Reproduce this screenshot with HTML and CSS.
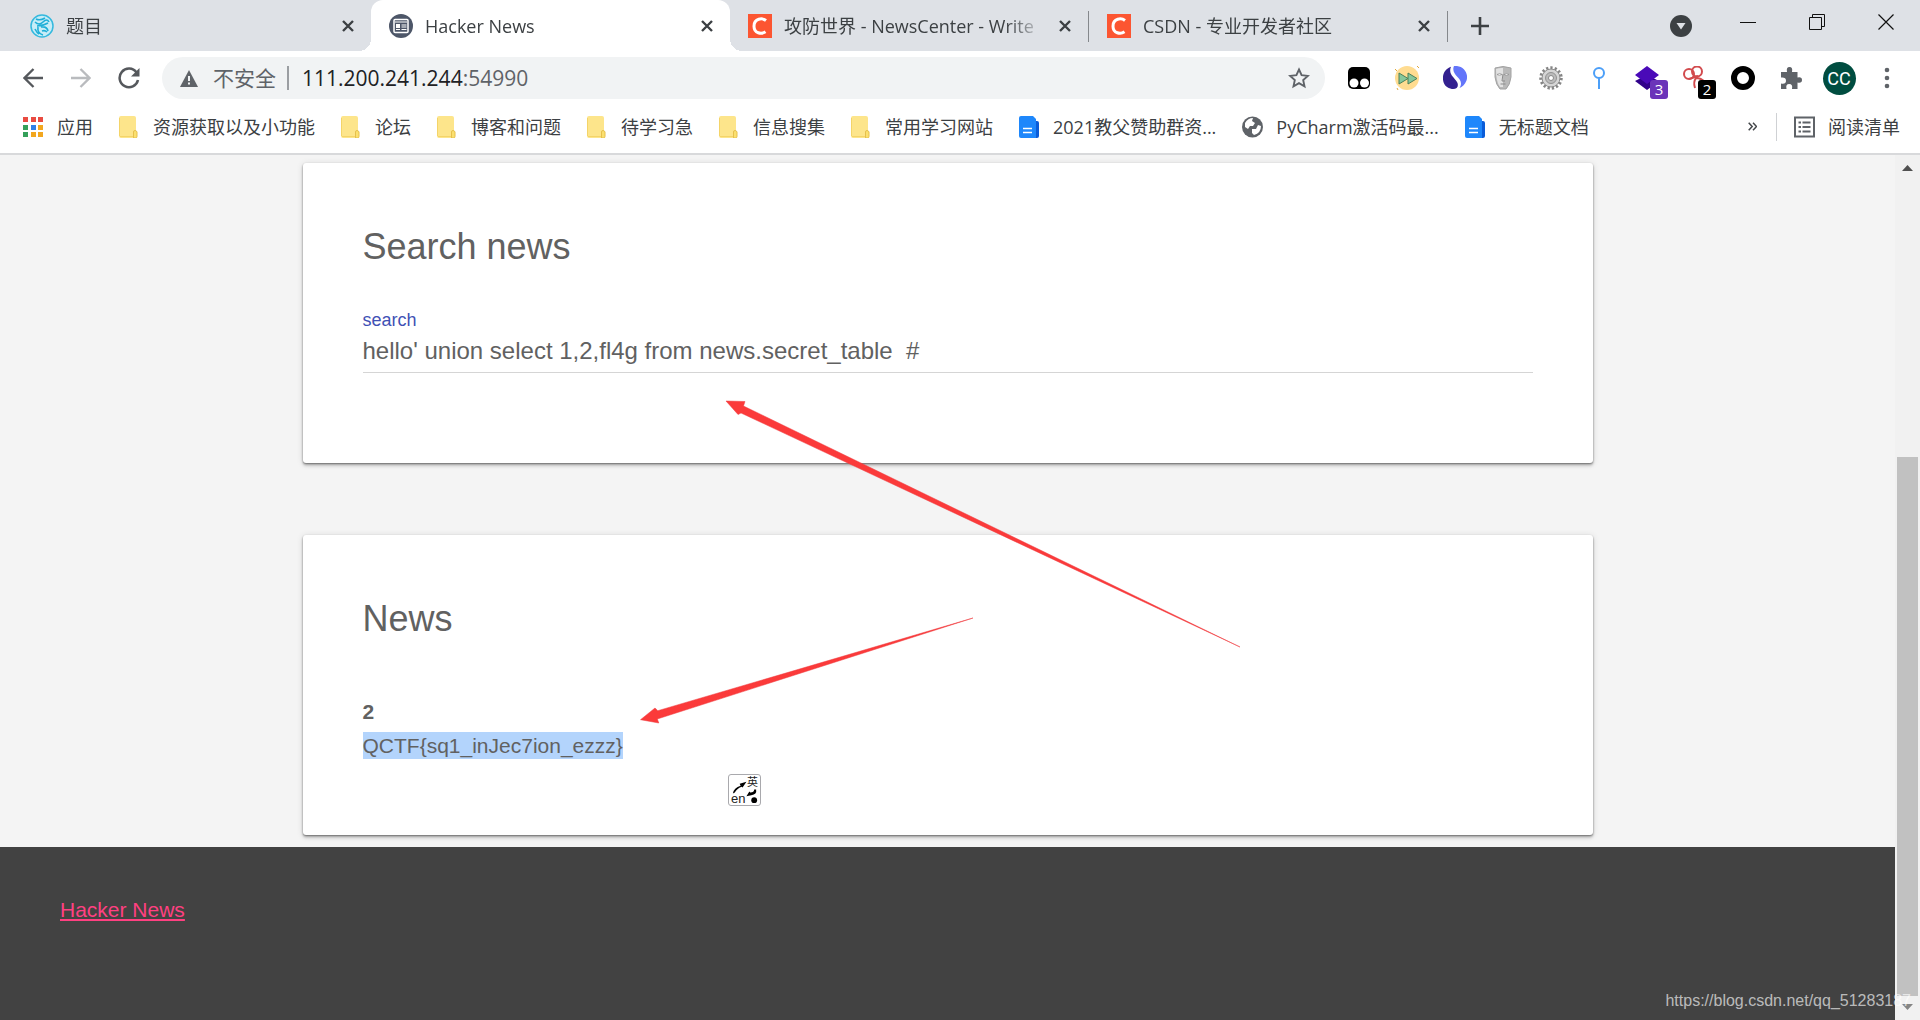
FILE: index.html
```html
<!DOCTYPE html>
<html lang="zh-CN">
<head>
<meta charset="utf-8">
<title>Hacker News</title>
<link rel="stylesheet" href="styles.css">
</head>
<body>
<svg class="defs" aria-hidden="true">
  <symbol id="close" viewBox="0 0 14 14"><path d="M2 2l10 10M12 2L2 12" stroke="#3c4043" stroke-width="2.400" fill="none"/></symbol>
  <symbol id="folder" viewBox="0 0 21 22"><path d="M0 2q0-2 2-2h13q2 0 2 2v20H2q-2 0-2-2z" fill="#fde58b"/><path d="M1 20.500h16M.5 2v18" stroke="#f4d469" fill="none"/><path d="M14.500 22v-6q0-1.500 1.500-1.500t2 1.500v4.500q0 1.500-1.500 1.500z" fill="#fbe06f" stroke="#e6c04d"/></symbol>
  <symbol id="doc" viewBox="0 0 21 22"><path d="M15 5h3q2 0 2 2v13q0 2-2 2h-3z" fill="#0b5cd8"/><path d="M2 0h12l3 3v19H2q-2 0-2-2V2q0-2 2-2z" fill="#1e87fb"/><path d="M4 12.500h9M4 16.500h9" stroke="#fff" stroke-width="1.600"/></symbol>
  <symbol id="csdn" viewBox="0 0 24 24"><path d="M0 0h24v24H0z" fill="#fc5531"/><path d="M18 6.500C14.500 3.800 6 4 6 12.200c0 7.300 7.500 8.300 11.500 5.600" stroke="#fff" stroke-width="3" fill="none"/></symbol>
</svg>

<header class="browser">
  <div class="tabstrip">
    <div class="tab">
      <svg class="favicon" viewBox="0 0 24 24"><circle cx="12" cy="12" r="11" fill="#c8edf7" stroke="#35b9de" stroke-width="1.500"/><path d="M5 8q4 4 8 0t6 0M7 12q6 0 11-3M8 13q-1 6 5 8M11 13q6-1 7 4M5 15q2 4 4 5M12 17q3-1 5 1M6 5q4 2 9-1" stroke="#20afd8" stroke-width="1.600" fill="none"/></svg>
      <span class="tab-title">题目</span>
      <button class="tab-close" aria-label="关闭"><svg width="14" height="14"><use href="#close"/></svg></button>
    </div>
    <div class="tab active">
      <svg class="favicon" viewBox="0 0 24 24"><circle cx="12" cy="12" r="12" fill="#4d5668"/><rect x="5" y="5.500" width="14" height="13" rx="1" fill="none" stroke="#fff" stroke-width="1.500"/><path d="M6 8h12M12.500 11h5M12.500 13h5M12.500 15.500h5M7 15.500h4" stroke="#fff" stroke-width="1.200"/><path d="M7 10h4v4H7z" fill="#fff"/></svg>
      <span class="tab-title">Hacker News</span>
      <button class="tab-close" aria-label="关闭"><svg width="14" height="14"><use href="#close"/></svg></button>
    </div>
    <div class="tab divided">
      <svg class="favicon"><use href="#csdn"/></svg>
      <span class="tab-title">攻防世界 - NewsCenter - Write</span>
      <button class="tab-close" aria-label="关闭"><svg width="14" height="14"><use href="#close"/></svg></button>
    </div>
    <div class="tab divided">
      <svg class="favicon"><use href="#csdn"/></svg>
      <span class="tab-title">CSDN - 专业开发者社区</span>
      <button class="tab-close" aria-label="关闭"><svg width="14" height="14"><use href="#close"/></svg></button>
    </div>
    <button class="strip-button" aria-label="新标签页"><svg width="18" height="18" viewBox="0 0 18 18"><path d="M9 0v18M0 9h18" stroke="#3c4043" stroke-width="2.600"/></svg></button>
    <span class="spacer"></span>
    <button class="strip-button" aria-label="搜索标签页"><svg width="22" height="22" viewBox="0 0 22 22"><circle cx="11" cy="11" r="11" fill="#3c4043"/><path d="M6.500 8h9L11 14.500z" fill="#dee1e6"/></svg></button>
    <button class="window-button" aria-label="最小化"><svg width="16" height="16" viewBox="0 0 16 16"><path d="M0 8.500h16" stroke="#111"/></svg></button>
    <button class="window-button" aria-label="还原"><svg width="16" height="16" viewBox="0 0 16 16"><path d="M.5 3.500h12v12H.5zM3.500 3.500v-3h12v12h-3" stroke="#111" fill="none"/></svg></button>
    <button class="window-button" aria-label="关闭窗口"><svg width="16" height="16" viewBox="0 0 16 16"><path d="M.5.5l15 15M15.500.5l-15 15" stroke="#111" stroke-width="1.200"/></svg></button>
  </div>

  <div class="toolbar">
    <button class="tool" aria-label="后退"><svg width="20" height="20" viewBox="0 0 20 20"><path d="M20 10H2M10.500 1L1.500 10l9 9" stroke="#55585c" stroke-width="2.300" fill="none"/></svg></button>
    <button class="tool" aria-label="前进"><svg width="20" height="20" viewBox="0 0 20 20"><path d="M0 10h18M9.500 1l9 9-9 9" stroke="#b9bbbe" stroke-width="2.300" fill="none"/></svg></button>
    <button class="tool" aria-label="重新加载"><svg width="22" height="22" viewBox="0 0 22 22"><path d="M18.500 5.500A9.300 9.300 0 1 0 20 13" stroke="#55585c" stroke-width="2.500" fill="none"/><path d="M21.500 1v8.500H13z" fill="#55585c"/></svg></button>
    <div class="omnibox">
      <svg width="18" height="17" viewBox="0 0 18 17"><path d="M9 0l9 17H0z" fill="#5f6368"/><path d="M9 6v5M9 12.500v2" stroke="#f1f3f4" stroke-width="2"/></svg>
      <span class="security">不安全</span>
      <span class="url">111.200.241.244<span class="port">:54990</span></span>
      <button class="star" aria-label="为此标签页添加书签"><svg width="22" height="22" viewBox="0 0 22 22"><path d="M11 2.500l2.600 5.700 6.200.7-4.600 4.200 1.300 6.200-5.500-3.200-5.500 3.200 1.300-6.200L2.200 8.900l6.200-.7z" stroke="#5f6368" stroke-width="1.900" fill="none"/></svg></button>
    </div>
    <div class="extensions">
      <button class="tool" aria-label="Tampermonkey"><svg width="24" height="24" viewBox="0 0 24 24"><rect x="1" y="1" width="22" height="22" rx="5"/><circle cx="7" cy="17" r="4.500" fill="#fff"/><circle cx="17.500" cy="17" r="4.500" fill="#fff"/></svg></button>
      <button class="tool" aria-label="快进"><svg width="26" height="26" viewBox="0 0 26 26"><circle cx="13" cy="13" r="12" fill="#ffdc91"/><path d="M5 8l9 5.500L5 19zM14 8l9 5.500-9 5.500z" fill="#86c79b" stroke="#4b805b"/><path d="M1 4l2 2M23 1l2 2M3 23l1 2" stroke="#e0a83b"/></svg></button>
      <button class="tool" aria-label="Similarweb"><svg width="24" height="24" viewBox="0 0 24 24"><path d="M8 .7C-2 4-2 17 4 21c8 5 13 0 10-5C11 11 5 8 8 .7z" fill="#33208f"/><path d="M11 0c9-1 15 7 12.500 14.500-1.500 4-4.500 6.500-7 7.500 3-5 1-8-2-11s-5.500-7-3.500-11z" fill="#6375fa"/></svg></button>
      <button class="tool" aria-label="面具"><svg width="18" height="24" viewBox="0 0 18 24"><path d="M1 2q8-3 16 0v9q-1 8-5 12H6Q2 19 1 11z" fill="#b9b9b9" stroke="#a2a2a2"/><path d="M2 3q4-1.500 7-1v19H6Q2 16 2 3z" fill="#e2e2e2"/><path d="M3 8.500q3-2 5 0-3 1.500-5 0M10 8.500q3-2 5 0-3 1.500-5 0" fill="#fff" stroke="#8a8a8a" stroke-width=".7"/><path d="M9 8l-1 7h3M6.500 18h5" fill="none" stroke="#8b8b8b"/></svg></button>
      <button class="tool" aria-label="设置"><svg width="24" height="24" viewBox="0 0 24 24"><circle cx="12" cy="12" r="10" fill="none" stroke="#858585" stroke-width="3.500" stroke-dasharray="2.200 2"/><circle cx="12" cy="12" r="9" fill="#d5d5d5" stroke="#8c8c8c"/><circle cx="12" cy="12" r="5.500" fill="#bbb" stroke="#929292"/><circle cx="12" cy="12" r="2.500" fill="#fff" stroke="#888"/></svg></button>
      <button class="tool" aria-label="图钉"><svg width="14" height="22" viewBox="0 0 14 22"><circle cx="7" cy="6" r="5" fill="none" stroke="#4c9ff8" stroke-width="2"/><path d="M7 11v11" stroke="#4c9ff8" stroke-width="2"/></svg></button>
      <button class="tool" aria-label="Wappalyzer"><svg width="24" height="24" viewBox="0 0 24 24"><path d="M12 9l12 6-12 9-12-9z" fill="#30018a"/><path d="M12 0l12 9-12 9L0 9z" fill="#4a0ab8"/></svg><span class="badge purple">3</span></button>
      <button class="tool" aria-label="扩展程序"><svg width="24" height="24" viewBox="0 0 24 24"><g fill="none" stroke="#d24b4e" stroke-width="2"><circle cx="6" cy="8" r="5"/><circle cx="14" cy="5.500" r="5"/><path d="M12 22q-2-6 1-10 5 0 9 4M6 13l6-2 3-1"/></g></svg><span class="badge">2</span></button>
      <button class="tool" aria-label="圆环"><svg width="24" height="24" viewBox="0 0 24 24"><circle cx="12" cy="12" r="9" fill="none" stroke="#000" stroke-width="6"/></svg></button>
      <button class="tool" aria-label="扩展程序菜单"><svg width="22" height="22" viewBox="0 0 22 22"><path d="M1 5h6q-1-5 2.500-5T12 5h5.500v5.500q4.500-1 4.500 2.500t-4.500 2.500V22H12q1-5-2.800-5T6.500 22H1v-5.500q5 1 5-2.800T1 10.500z" fill="#5f6368"/></svg></button>
      <button class="tool" aria-label="用户"><span class="avatar">CC</span></button>
      <button class="tool" aria-label="菜单"><svg width="6" height="22" viewBox="0 0 6 22"><g fill="#5f6368"><circle cx="3" cy="3" r="2.300"/><circle cx="3" cy="11" r="2.300"/><circle cx="3" cy="19" r="2.300"/></g></svg></button>
    </div>
  </div>

  <nav class="bookmarks">
    <a class="bookmark" href="#"><svg viewBox="0 0 21 22"><path d="M0 1h5v5H0zM8 1h5v5H8zM15 1h5v5h-5z" fill="#e94b41"/><path d="M0 9h5v5H0zM0 16h5v5H0z" fill="#34a05a"/><path d="M8 9h5v5H8z" fill="#2f80e8"/><path d="M15 9h5v5h-5zM8 16h5v5H8zM15 16h5v5h-5z" fill="#f2a71f"/></svg>应用</a>
    <a class="bookmark" href="#"><svg><use href="#folder"/></svg>资源获取以及小功能</a>
    <a class="bookmark" href="#"><svg><use href="#folder"/></svg>论坛</a>
    <a class="bookmark" href="#"><svg><use href="#folder"/></svg>博客和问题</a>
    <a class="bookmark" href="#"><svg><use href="#folder"/></svg>待学习急</a>
    <a class="bookmark" href="#"><svg><use href="#folder"/></svg>信息搜集</a>
    <a class="bookmark" href="#"><svg><use href="#folder"/></svg>常用学习网站</a>
    <a class="bookmark" href="#"><svg><use href="#doc"/></svg>2021教父赞助群资...</a>
    <a class="bookmark" href="#"><svg viewBox="0 0 21 22"><circle cx="10.500" cy="11" r="10.500" fill="#5f6368"/><path d="M3 7q3-5 8-5l-1 3 3 2-2 3H8l-2 3-3-2zM10 13h4l2-4 3 1q0 7-7 9l-2-2z" fill="#fff"/></svg>PyCharm激活码最...</a>
    <a class="bookmark" href="#"><svg><use href="#doc"/></svg>无标题文档</a>
    <span class="spacer"></span>
    <button class="more" aria-label="更多书签"><svg width="9" height="9" viewBox="0 0 9 9"><path d="M.7.7l3.500 3.800L.7 8.300M5 .7l3.500 3.800L5 8.300" stroke="#44474a" stroke-width="1.500" fill="none"/></svg></button>
    <a class="bookmark reading" href="#"><svg viewBox="0 0 21 22"><path d="M1 1.500h19v19H1z" fill="none" stroke="#5f6368" stroke-width="2"/><path d="M4.500 6.500H7M4.500 11H7M4.500 15.500H7M8.500 6.500h8M8.500 11h8M8.500 15.500h8" stroke="#5f6368" stroke-width="2"/></svg>阅读清单</a>
  </nav>
</header>

<div class="viewport">
  <div class="document">
    <main>
      <section class="card">
        <h2>Search news</h2>
        <form>
          <label for="search">search</label>
          <input id="search" type="text" value="hello' union select 1,2,fl4g from news.secret_table  #">
        </form>
      </section>
      <section class="card">
        <h2>News</h2>
        <article>
          <b>2</b>
          <p><mark>QCTF{sq1_inJec7ion_ezzz}</mark></p>
        </article>
      </section>
    </main>
    <footer><a href="#">Hacker News</a></footer>
  </div>
  <div class="scrollbar" aria-hidden="true">
    <svg width="11" height="6" viewBox="0 0 11 6"><path d="M0 6L5.500 0 11 6z" fill="#505050"/></svg>
    <div class="track"><div class="thumb"></div></div>
    <svg width="11" height="6" viewBox="0 0 11 6"><path d="M0 0l5.500 6L11 0z" fill="#858585"/></svg>
  </div>
  <svg class="arrows" width="1300" height="800" viewBox="0 155 1300 800" aria-hidden="true"><path d="M726 401l19 .5-1.500 4.500L1240 647 741 413l-3 1.500zM640.500 719.700L655 708l2.800 2.700L973 618 657.300 719l1.500 4z" fill="#fb3a3a" stroke="#ee3a3f" stroke-width=".5"/></svg>
  <button class="translate" aria-label="英 en"><span class="zh">英</span><span class="en">en</span><svg viewBox="0 0 32 32"><path d="M4 19q1-6 8-8l-1-2 7-2-4 6-1-1q-5 2-7 6zM28 15q1 5-5 6l-5 1 3-5 1 1q4 0 4-3z"/><circle cx="26" cy="26" r="3"/></svg></button>
  <span class="watermark">https://blog.csdn.net/qq_51283187</span>
</div>
</body>
</html>
```
FILE: styles.css
```css
* { box-sizing: border-box; }

body {
  margin: 0;
  min-height: 100vh;
  display: flex;
  flex-direction: column;
  font-family: "Liberation Sans", "Noto Sans CJK SC", sans-serif;
  color: #616161;
}

button {
  border: 0;
  padding: 0;
  background: none;
  font: inherit;
  display: flex;
  align-items: center;
  justify-content: center;
  flex: none;
}

svg { flex: none; display: block; }
.defs { position: absolute; width: 0; height: 0; }
.spacer { flex: 1; }

/* Browser chrome */
.browser {
  background: #fff;
  border-bottom: 2px solid #d8d9db;
  font-family: "Open Sans", "Noto Sans CJK SC", sans-serif;
  font-size: 18px;
  font-weight: 400;
  color: #3c4043;
}

.tabstrip {
  display: flex;
  height: 51px;
  padding-left: 12px;
  background: #dee1e6;
}

.tab {
  position: relative;
  flex: 0 1 359px;
  min-width: 0;
  display: flex;
  align-items: center;
  gap: 12px;
  padding: 0 16px 0 18px;
}

.tab.active { background: #fff; border-radius: 12px 12px 0 0; }
.tab.active::before,
.tab.active::after {
  content: "";
  position: absolute;
  bottom: 0;
  width: 12px;
  height: 12px;
}
.tab.active::before { right: 100%; background: radial-gradient(circle at 0 0, transparent 12px, #fff 12px); }
.tab.active::after { left: 100%; background: radial-gradient(circle at 100% 0, transparent 12px, #fff 12px); }

.tab.divided { border-right: 1px solid; border-image: linear-gradient(transparent 12px, #85888c 12px, #85888c 41px, transparent 41px) 1; }

.favicon { width: 24px; height: 24px; }

.tab-title {
  flex: 1;
  min-width: 0;
  overflow: hidden;
  white-space: nowrap;
  line-height: 28px;
  mask-image: linear-gradient(to left, transparent, #000 40px);
}

.strip-button { width: 64px; }
.window-button { width: 69px; height: 43px; }

.toolbar {
  display: flex;
  align-items: center;
  padding: 6px 9px 5px;
}

.tool { position: relative; width: 48px; height: 42px; }

.omnibox {
  flex: 1;
  min-width: 0;
  display: flex;
  align-items: center;
  height: 42px;
  margin: 0 10px 0 9px;
  padding: 0 15px 0 18px;
  border-radius: 21px;
  background: #f1f3f4;
  font-size: 21px;
  line-height: 30px;
}

.security {
  margin-left: 15px;
  padding-right: 11px;
  border-right: 2px solid #9b9ea2;
  line-height: 24px;
  color: #5f6368;
}

.url { margin-left: 13px; flex: 1; color: #202124; }
.port { color: #5f6368; }
.extensions { display: flex; }

.badge {
  position: absolute;
  left: 27px;
  top: 23px;
  width: 18px;
  height: 19px;
  border-radius: 3px;
  background: #000;
  color: #fff;
  font-size: 15px;
  line-height: 19px;
  text-align: center;
}
.badge.purple { background: #6b34b9; }

.avatar {
  width: 33px;
  height: 33px;
  border-radius: 50%;
  background: #004d40;
  color: #fff;
  font-family: Roboto, sans-serif;
  font-size: 18px;
  line-height: 33px;
}

.bookmarks {
  display: flex;
  align-items: center;
  gap: 27px;
  height: 49px;
  padding: 0 20px 4px 23px;
}

.bookmark {
  display: flex;
  align-items: center;
  gap: 13px;
  color: inherit;
  text-decoration: none;
  white-space: nowrap;
  line-height: 24px;
}
.bookmark svg { width: 21px; height: 22px; }
.bookmark + .bookmark { margin-left: -1px; }

.more { width: 9px; margin-right: -8px; }
.reading { padding: 2px 0 2px 17px; border-left: 1px solid #cfd1d4; }

/* Page */
.viewport {
  position: relative;
  flex: 1;
  display: flex;
  background: #f4f4f4;
}

.document { flex: 1; display: flex; flex-direction: column; }

main {
  display: flex;
  flex-direction: column;
  align-items: center;
  gap: 72px;
  padding: 8px 24px 12px;
}

.card {
  width: 100%;
  max-width: 1290px;
  min-height: 300px;
  padding: 60px;
  border-radius: 3px;
  background: #fff;
  box-shadow: 0 3px 3px rgba(0, 0, 0, .14), 0 1px 2px rgba(0, 0, 0, .45), 0 1px 7px rgba(0, 0, 0, .12);
}

h2 {
  margin: 0 0 38px;
  font-size: 36px;
  font-weight: 400;
  line-height: 47px;
}

label {
  display: block;
  font-size: 18px;
  line-height: 24px;
  color: #3f51b5;
}

input {
  display: block;
  width: 100%;
  height: 41px;
  padding: 1px 0 3px;
  border: 0;
  border-bottom: 1px solid #d5d5d5;
  background: none;
  font: 24px "Liberation Sans", sans-serif;
  color: inherit;
  outline: 0;
}

article { padding-top: 15px; font-size: 21px; line-height: 34px; }
article p { margin: 0; }
mark { padding: 2px 0; background: #b3d4fc; color: inherit; }

footer {
  flex: 1;
  padding: 46px 60px;
  background: #424242;
  font-size: 21px;
  line-height: 34px;
}
footer a { color: #ff4081; }

.scrollbar {
  width: 25px;
  display: flex;
  flex-direction: column;
  align-items: center;
  padding: 10px 2px;
  background: #f1f1f1;
}
.track {
  flex: 1;
  align-self: stretch;
  display: flex;
  flex-direction: column;
  justify-content: flex-end;
  margin: 9px 0 8px;
}
.thumb { height: 66%; background: #c1c1c1; }

/* Annotations over the page */
.arrows { position: absolute; left: 0; top: 0; pointer-events: none; }

.translate {
  position: absolute;
  left: 728px;
  top: 619px;
  width: 33px;
  height: 32px;
  border: 1px solid #a9a9ad;
  border-radius: 3px;
  background: #fff;
  color: #222;
}
.translate svg { position: absolute; inset: 0; }
.zh { position: absolute; right: 2px; top: 2px; font-size: 11px; line-height: 11px; }
.en { position: absolute; left: 2px; bottom: 0; font-size: 13px; line-height: 12px; }

.watermark {
  position: absolute;
  right: 9px;
  bottom: 9px;
  font-size: 16px;
  line-height: 20px;
  color: rgba(255, 255, 255, .65);
}
```
